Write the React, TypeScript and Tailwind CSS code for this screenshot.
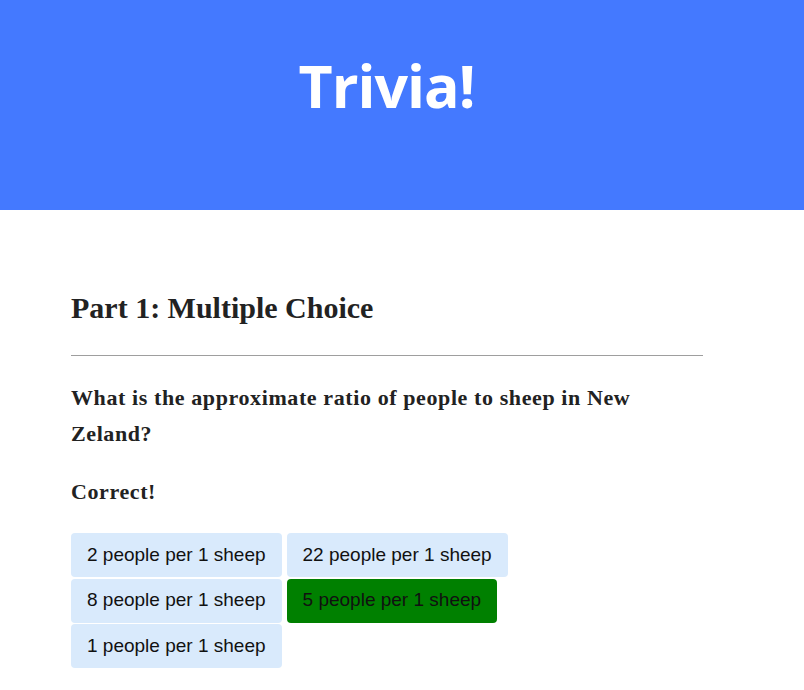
export default function App() {
  const answers = [
    { text: "2 people per 1 sheep", correct: false },
    { text: "22 people per 1 sheep", correct: false },
    { text: "8 people per 1 sheep", correct: false },
    { text: "5 people per 1 sheep", correct: true },
    { text: "1 people per 1 sheep", correct: false },
  ];

  return (
    <div className="min-h-screen bg-white">
      <header className="bg-[#4479ff] h-[210px] flex justify-center pt-[48px] pr-[31px]">
        <h1 className="text-white text-[59px] leading-[74px] font-bold tracking-[-1px] font-['Open_Sans',sans-serif]">
          Trivia!
        </h1>
      </header>

      <main className="ml-[71px] w-[632px] font-['Liberation_Serif',serif] text-[#222]">
        <h2 className="text-[30px] font-bold leading-[36px] mt-[80px]">
          Part 1: Multiple Choice
        </h2>
        <hr className="mt-[29px] border-t border-[#9e9e9e]" />
        <p className="text-[22px] font-bold leading-[36px] tracking-[0.6px] mt-[24px]">
          What is the approximate ratio of people to sheep in New Zeland?
        </p>
        <p className="text-[22px] font-bold leading-[36px] tracking-[0.6px] mt-[22px]">Correct!</p>
        <div className="flex flex-wrap gap-x-[5px] gap-y-[1.5px] mt-[23px] w-[450px]">
          {answers.map((a) => (
            <button
              key={a.text}
              type="button"
              className={
                "h-[44px] px-4 rounded text-[19px] text-[#111] font-['Liberation_Sans',Arial,sans-serif] " +
                (a.correct ? "bg-[#008000]" : "bg-[#d9eafc]")
              }
            >
              {a.text}
            </button>
          ))}
        </div>
      </main>
    </div>
  );
}
